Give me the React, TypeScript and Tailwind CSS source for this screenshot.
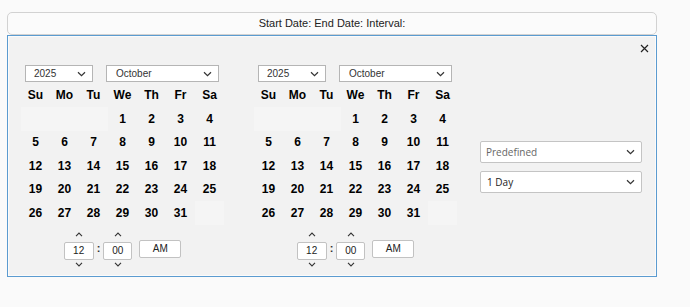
const days = Array.from({ length: 31 }, (_, i) => i + 1);
const weekDays = ["Su", "Mo", "Tu", "We", "Th", "Fr", "Sa"];

const Chevron = ({ className = "" }: { className?: string }) => (
  <svg width="9" height="6" viewBox="0 0 9 6" className={className}>
    <path d="M1 1.2 L4.5 4.6 L8 1.2" fill="none" stroke="#333" strokeWidth="1.2" />
  </svg>
);

const Caret = ({ up }: { up?: boolean }) => (
  <svg width="8" height="5" viewBox="0 0 8 5">
    <path
      d={up ? "M1 4.2 L4 1 L7 4.2" : "M1 0.8 L4 4 L7 0.8"}
      fill="none"
      stroke="#333"
      strokeWidth="1.1"
    />
  </svg>
);

const Calendar = () => {
  // October 2025 starts on Wednesday
  const cells: (number | null)[] = [null, null, null, ...days, null];

  return (
    <div className="flex w-[203px] flex-col">
      <div className="flex h-[17px] gap-[13px] pl-[4px]">
        <div className="flex w-[68px] items-center justify-between border border-[#b5b5b5] bg-white pl-[8px] pr-[6px] text-[10px] text-[#333]">
          <span>2025</span>
          <Chevron />
        </div>
        <div className="flex w-[113px] items-center justify-between border border-[#b5b5b5] bg-white pl-[9px] pr-[6px] text-[10px] text-[#333]">
          <span>October</span>
          <Chevron />
        </div>
      </div>
      <div className="mt-[1px] grid grid-cols-7">
        {weekDays.map((d) => (
          <div key={d} className="flex h-[24px] items-center justify-center text-[12px] font-bold text-black">
            {d}
          </div>
        ))}
        {cells.map((d, idx) => (
          <div
            key={idx}
            className={`flex h-[23.5px] items-center justify-center text-[12px] font-bold text-black ${d === null ? "bg-[#f5f5f5]" : ""}`}
          >
            {d}
          </div>
        ))}
      </div>
      <div className="mt-[3px] flex justify-center">
        <div className="flex items-center gap-[3px]">
          <div className="flex w-[30px] flex-col items-center">
            <div className="flex h-[14px] items-center">
              <Caret up />
            </div>
            <div className="flex h-[18px] w-[30px] items-center justify-center rounded-[2px] border border-[#c2c2c2] bg-white text-[10px] text-[#222]">
              12
            </div>
            <div className="flex h-[10px] items-center">
              <Caret />
            </div>
          </div>
          <span className="text-[11px] font-bold text-[#333]">:</span>
          <div className="flex w-[29px] flex-col items-center">
            <div className="flex h-[14px] items-center">
              <Caret up />
            </div>
            <div className="flex h-[18px] w-[29px] items-center justify-center rounded-[2px] border border-[#c2c2c2] bg-white text-[10px] text-[#222]">
              00
            </div>
            <div className="flex h-[10px] items-center">
              <Caret />
            </div>
          </div>
          <div className="ml-[4px] flex h-[18px] w-[42px] items-center justify-center rounded-[2px] border border-[#c2c2c2] bg-white text-[10px] text-[#222]">
            AM
          </div>
        </div>
      </div>
    </div>
  );
};

export default function App() {
  return (
    <div className="min-h-[307px] w-[690px] bg-[#fafafa] px-[7px] pt-[12px] font-['Liberation_Sans',Arial,sans-serif]">
      <div className="w-[650px]">
        <div className="flex h-[23px] items-center justify-center rounded-[5px] border border-[#d2d2d2] bg-[#fbfbfb] text-[11px] text-[#222]">
          Start Date: End Date: Interval:
        </div>
        <div className="border border-[#5b9bd0] bg-[#f2f2f2] pb-[6px] pl-[13px] pr-[14px] pt-[2px] shadow-[inset_0_0_0_1px_#fbfbfb]">
          <div className="-mr-[7px] flex h-[20px] items-center justify-end">
            <svg width="9" height="9" viewBox="0 0 9 9">
              <path d="M1 1 L8 8 M8 1 L1 8" stroke="#222" strokeWidth="1.2" />
            </svg>
          </div>
          <div className="mt-[7px] flex items-center">
            <Calendar />
            <div className="ml-[30px]">
              <Calendar />
            </div>
            <div className="ml-[23px] flex w-[162px] flex-col gap-[8px] font-['Open_Sans','Noto_Sans',sans-serif] text-[10px]">
              <div className="flex h-[22px] items-center justify-between rounded-[2px] border border-[#c4c4c4] bg-white pl-[5px] pr-[6px] text-[#666]">
                <span>Predefined</span>
                <Chevron />
              </div>
              <div className="flex h-[22px] items-center justify-between rounded-[2px] border border-[#c4c4c4] bg-white pl-[6px] pr-[6px] text-[#222]">
                <span>1 Day</span>
                <Chevron />
              </div>
            </div>
          </div>
        </div>
      </div>
    </div>
  );
}
